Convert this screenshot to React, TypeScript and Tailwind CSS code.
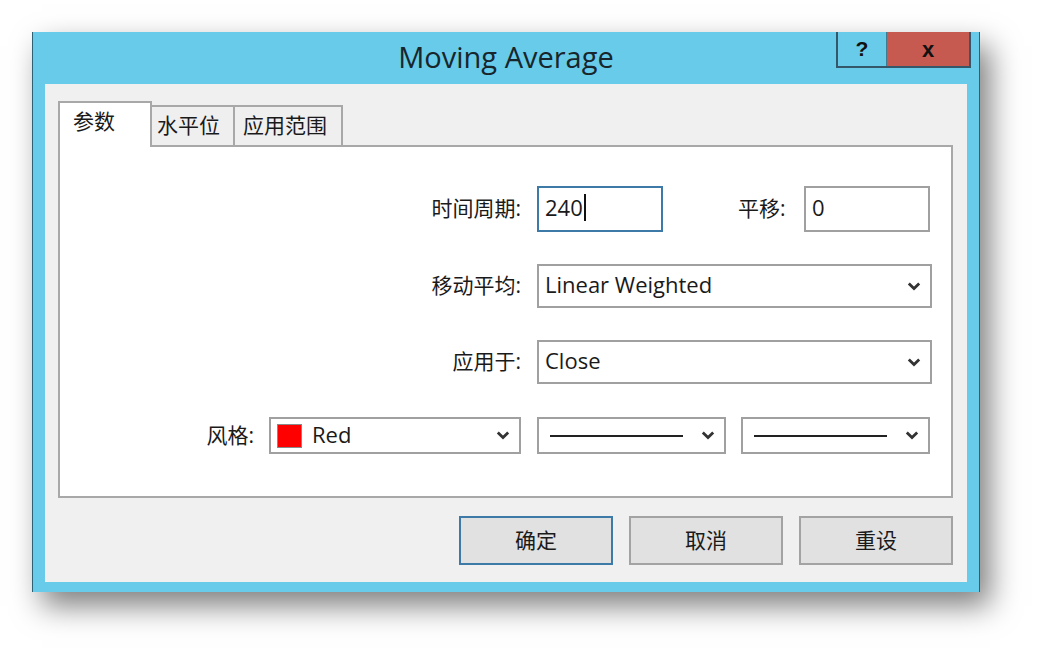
import React from "react";

const Chevron = () => (
  <svg width="14" height="9" viewBox="0 0 14 9" className="shrink-0">
    <path d="M1.8 1.6 L7 6.6 L12.2 1.6" fill="none" stroke="#333" strokeWidth="2.8" strokeLinecap="butt" />
  </svg>
);

const font = "font-['Open_Sans','Noto_Sans_CJK_SC',sans-serif]";

export default function App() {
  return (
    <div className={`w-[1042px] h-[654px] bg-white pl-[32px] pt-[32px] ${font} text-[#1a1a1a]`}>
      <div className="w-[948px] h-[560px] flex flex-col bg-[#67cbe9] border-x border-[#2f6174] shadow-[10px_14px_28px_rgba(0,0,0,0.5)]">
        {/* Title bar */}
        <div className="h-[52px] shrink-0 grid grid-cols-[1fr_auto_1fr]">
          <div />
          <div className="self-center text-[29px] leading-none pb-[4px] text-[#18262c]">Moving Average</div>
          <div className="flex justify-end items-start pr-[8px]">
            <div className="flex h-[36px] border-b-2 border-l-2 border-r-2 border-[#34576a]">
              <div className="w-[49px] h-full flex items-center justify-center text-[21px] font-bold text-[#111] border-r border-[#3f7d93] font-['Liberation_Sans',sans-serif]">?</div>
              <div className="w-[82px] h-full bg-[#c75a50] flex items-center justify-center text-[22px] font-bold text-[#111] font-['Liberation_Sans',sans-serif]">x</div>
            </div>
          </div>
        </div>
        {/* Client area */}
        <div className="flex-1 mx-[12px] mb-[10px] bg-[#f0f0f0] flex flex-col pl-[13px] pr-[14px] pt-[17px]">
          {/* Tabs */}
          <div className="flex items-end -mb-[2px] relative z-10 text-[21px] leading-none">
            <div className="w-[94px] h-[46px] bg-white border-2 border-b-0 border-[#a8a8a8] pl-[13px] pt-[8px]">参数</div>
            <div className="w-[83px] h-[42px] bg-[#efefef] border-2 border-l-0 border-[#a8a8a8] pl-[5px] pt-[8px]">水平位</div>
            <div className="w-[108px] h-[42px] bg-[#efefef] border-2 border-l-0 border-[#a8a8a8] pl-[8px] pt-[8px]">应用范围</div>
          </div>
          {/* Panel */}
          <div className="h-[353px] bg-white border-2 border-[#a8a8a8] flex flex-col pt-[39px] text-[21px]">
            {/* Row 1 */}
            <div className="flex items-center justify-end pr-[21px] h-[46px]">
              <span className="mr-[16px]">时间周期:</span>
              <div className="w-[126px] h-[46px] border-2 border-[#3e7aa8] flex items-center pl-[6px] pb-[3px] text-[22px]">
                <span>240</span>
                <span className="w-[2px] h-[27px] bg-[#111] ml-[1px]" />
              </div>
              <span className="ml-[75px] mr-[15px] w-[51px]">平移:</span>
              <div className="w-[126px] h-[46px] border-2 border-[#a0a0a0] flex items-center pl-[6px] pb-[3px] text-[22px]">0</div>
            </div>
            {/* Row 2 */}
            <div className="flex items-center justify-end pr-[19px] mt-[32px] h-[44px]">
              <span className="mr-[16px]">移动平均:</span>
              <div className="w-[395px] h-[44px] border-2 border-[#a0a0a0] flex items-center justify-between pl-[6px] pr-[9px] text-[22px]">
                <span className="pb-[4px]">Linear Weighted</span>
                <Chevron />
              </div>
            </div>
            {/* Row 3 */}
            <div className="flex items-center justify-end pr-[19px] mt-[32px] h-[44px]">
              <span className="mr-[16px]">应用于:</span>
              <div className="w-[395px] h-[44px] border-2 border-[#a0a0a0] flex items-center justify-between pl-[6px] pr-[9px] text-[22px]">
                <span className="pb-[4px]">Close</span>
                <Chevron />
              </div>
            </div>
            {/* Row 4 */}
            <div className="flex items-center justify-end pr-[21px] mt-[33px] h-[37px]">
              <span className="mr-[15px]">风格:</span>
              <div className="w-[252px] h-[37px] border-2 border-[#a0a0a0] flex items-center pl-[6px] pr-[9px] text-[22px]">
                <span className="w-[25px] h-[24px] bg-[#ff0000] border border-[#8a8a8a] shrink-0" />
                <span className="ml-[10px] flex-1 pb-[2px]">Red</span>
                <Chevron />
              </div>
              <div className="ml-[16px] w-[189px] h-[37px] border-2 border-[#a0a0a0] flex items-center pl-[11px] pr-[9px]">
                <span className="w-[133px] h-[2px] bg-[#222]" />
                <span className="flex-1" />
                <Chevron />
              </div>
              <div className="ml-[15px] w-[189px] h-[37px] border-2 border-[#a0a0a0] flex items-center pl-[11px] pr-[9px]">
                <span className="w-[133px] h-[2px] bg-[#222]" />
                <span className="flex-1" />
                <Chevron />
              </div>
            </div>
          </div>
          {/* Buttons */}
          <div className="flex justify-end gap-[16px] mt-[18px] text-[21px]">
            <button className="w-[154px] h-[49px] bg-[#e1e1e1] border-2 border-[#3e7aa8] flex items-center justify-center">确定</button>
            <button className="w-[154px] h-[49px] bg-[#e1e1e1] border-2 border-[#a3a3a3] flex items-center justify-center">取消</button>
            <button className="w-[154px] h-[49px] bg-[#e1e1e1] border-2 border-[#a3a3a3] flex items-center justify-center">重设</button>
          </div>
        </div>
      </div>
    </div>
  );
}
